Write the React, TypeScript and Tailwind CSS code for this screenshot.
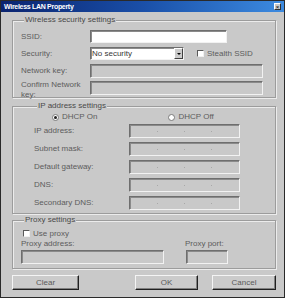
import React from "react";

const font = { fontFamily: '"Liberation Sans", Arial, sans-serif' };

const sunkenOff =
  "h-[14px] bg-[#c9c9c9] border border-t-[#6e6e6e] border-l-[#6e6e6e] border-b-[#f2f2f2] border-r-[#f2f2f2] shadow-[inset_1px_1px_0_#8a8a8a]";
const sunkenOn =
  "h-[13px] bg-white border border-t-[#6e6e6e] border-l-[#6e6e6e] border-b-[#f2f2f2] border-r-[#f2f2f2] shadow-[inset_1px_1px_0_#8a8a8a]";
const group =
  "border border-[#9c9c9c] shadow-[inset_1px_1px_0_#ececec,1px_1px_0_#ececec] m-0";
const legend = "ml-[3px] px-[1px] leading-[10px] text-[8px] text-[#4a4a4a] bg-[#c9c9c9]";
const button =
  "h-[15px] bg-[#cbcbcb] border border-t-[#f4f4f4] border-l-[#f4f4f4] border-b-[#202020] border-r-[#202020] shadow-[inset_-1px_-1px_0_#808080] text-[8px] text-[#5a5a5a] leading-none flex items-center justify-center";

function Check() {
  return (
    <span className="w-[7px] h-[7px] bg-white border border-t-[#5a5a5a] border-l-[#5a5a5a] border-b-[#f0f0f0] border-r-[#f0f0f0] shrink-0" />
  );
}

function Radio({ on }: { on?: boolean }) {
  return (
    <span className="w-[7px] h-[7px] rounded-full bg-white border border-[#7a7a7a] flex items-center justify-center shrink-0">
      {on && <span className="w-[3px] h-[3px] rounded-full bg-[#202020]" />}
    </span>
  );
}

function IpBox() {
  return (
    <div className={`${sunkenOff} w-[111px] flex items-center`}>
      <span className="ml-[27px] w-[1px] h-[1px] bg-[#a8a8a8]" />
      <span className="ml-[26px] w-[1px] h-[1px] bg-[#a8a8a8]" />
      <span className="ml-[26px] w-[1px] h-[1px] bg-[#a8a8a8]" />
    </div>
  );
}

export default function App() {
  const ipRows = ["IP address:", "Subnet mask:", "Default gateway:", "DNS:", "Secondary DNS:"];

  return (
    <div
      style={font}
      className="w-[285px] h-[298px] bg-[#c9c9c9] border border-[#2a2a2a] flex flex-col text-[8px] text-[#5c5c5c] overflow-hidden"
    >
      {/* title bar */}
      <div className="h-[11px] bg-gradient-to-r from-[#0b2470] via-[#1a4fa8] to-[#3d8be0] flex items-center pl-[3px] pr-[3px]">
        <span className="text-white text-[7px] font-bold leading-none tracking-[-0.3px]">Wireless LAN Property</span>
        <span className="ml-auto w-[7px] h-[7px] bg-[#c8c8c8] border border-t-white border-l-white border-b-[#303030] border-r-[#303030] flex items-center justify-center text-[6px] leading-none text-black">
          ×
        </span>
      </div>

      <div className="flex-1 pl-[11px] pr-[8px] pt-[3px]">
        {/* wireless security */}
        <fieldset className={`${group} pl-[8px] pr-0 pb-[3px]`}>
          <legend className={legend}>Wireless security settings</legend>
          <div className="flex flex-col gap-[4px] pt-[5px]">
            <div className="flex items-center h-[13px]">
              <span className="w-[69px]">SSID:</span>
              <div className={`${sunkenOn} w-[137px]`} />
            </div>
            <div className="flex items-center h-[13px]">
              <span className="w-[69px]">Security:</span>
              <div className={`${sunkenOn} w-[94px] flex items-center`}>
                <span className="pl-[1px] text-[#383838] leading-none">No security</span>
                <span className="ml-auto w-[9px] h-[11px] bg-[#cbcbcb] border border-t-white border-l-white border-b-[#404040] border-r-[#404040] flex items-center justify-center">
                  <span className="w-0 h-0 border-l-[2px] border-r-[2px] border-t-[2px] border-l-transparent border-r-transparent border-t-black" />
                </span>
              </div>
              <span className="ml-[13px] flex items-center gap-[3px]">
                <Check />
                <span>Stealth SSID</span>
              </span>
            </div>
            <div className="flex items-center h-[13px]">
              <span className="w-[69px]">Network key:</span>
              <div className={`${sunkenOff} w-[173px]`} />
            </div>
            <div className="flex items-start h-[13px]">
              <span className="w-[69px] leading-[10px] -mt-[1px]">
                Confirm Network
                <br />
                key:
              </span>
              <div className={`${sunkenOff} w-[173px]`} />
            </div>
          </div>
        </fieldset>

        {/* ip settings */}
        <fieldset className={`${group} mt-[3px] pl-[21px] pr-0 pb-[3px]`}>
          <legend className={legend}>IP address settings</legend>
          <div className="flex items-center h-[10px] mt-[1px]">
            <span className="ml-[18px] flex items-center gap-[3px]">
              <Radio on />
              <span>DHCP On</span>
            </span>
            <span className="ml-[71px] flex items-center gap-[3px]">
              <Radio />
              <span>DHCP Off</span>
            </span>
          </div>
          <div className="flex flex-col gap-[4px] mt-[2px]">
            {ipRows.map((label) => (
              <div key={label} className="flex items-center h-[14px]">
                <span className="w-[95px]">{label}</span>
                <IpBox />
              </div>
            ))}
          </div>
        </fieldset>

        {/* proxy */}
        <fieldset className={`${group} mt-[1px] pl-[8px] pr-0 pb-[4px]`}>
          <legend className={legend}>Proxy settings</legend>
          <div className="flex items-center h-[9px] mt-[4px] ml-[2px] gap-[3px]">
            <Check />
            <span>Use proxy</span>
          </div>
          <div className="flex h-[10px] mt-[1px] leading-[10px]">
            <span className="w-[164px]">Proxy address:</span>
            <span>Proxy port:</span>
          </div>
          <div className="flex mt-[1px] gap-[22px]">
            <div className={`${sunkenOff} w-[143px]`} />
            <div className={`${sunkenOff} w-[42px]`} />
          </div>
        </fieldset>

        {/* buttons */}
        <div className="flex mt-[6px]">
          <button className={`${button} w-[67px]`}>Clear</button>
          <button className={`${button} w-[63px] ml-auto`}>OK</button>
          <button className={`${button} w-[64px] ml-[14px]`}>Cancel</button>
        </div>
      </div>
    </div>
  );
}
